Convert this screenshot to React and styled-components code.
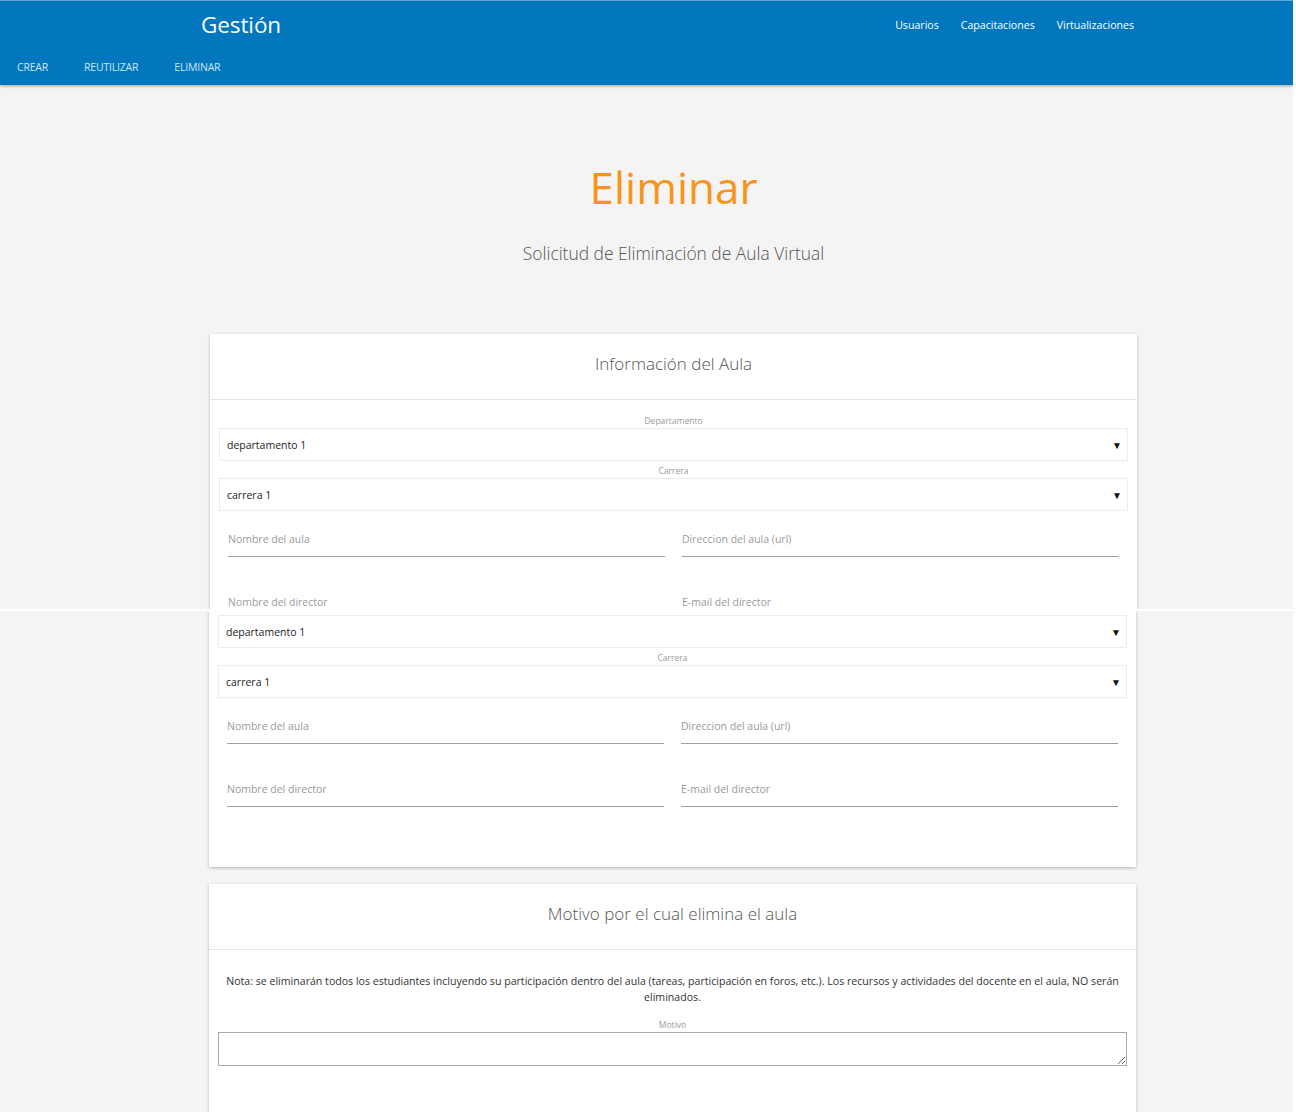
import React from 'react';
import styled, { createGlobalStyle } from 'styled-components';

const Global = createGlobalStyle`
  html, body { margin: 0; padding: 0; background: #fff; }
  body { font-family: "Open Sans", "Noto Sans", sans-serif; }
  * { box-sizing: border-box; }
`;

const Page = styled.div`
  width: 1293px;
  min-height: 1112px;
  background: #f4f4f4;
  overflow: hidden;
`;

const Header = styled.header`
  position: relative;
  z-index: 2;
  height: 85px;
  background: #0277bd;
  border-top: 1px solid #5fa6d6;
  box-shadow: 0 1px 3px rgba(0, 0, 0, 0.35);
  display: flex;
  flex-direction: column;
`;

const TopRow = styled.div`
  height: 48px;
  display: flex;
  align-items: center;
  justify-content: space-between;
  padding: 0 159px 1px 201px;
`;

const Brand = styled.div`
  color: #fff;
  font-size: 22.5px;
  letter-spacing: -0.1px;
`;

const NavLinks = styled.nav`
  display: flex;
  gap: 22px;
`;

const NavLink = styled.a`
  color: #fff;
  font-size: 10.6px;
  text-decoration: none;
`;

const SubRow = styled.nav`
  height: 36px;
  display: flex;
  align-items: center;
  gap: 36px;
  padding-left: 17px;
`;

const SubLink = styled.a`
  color: #cfe5f4;
  font-size: 10.5px;
  letter-spacing: -0.2px;
  text-decoration: none;
  text-transform: uppercase;
`;

const Main = styled.main`
  display: flex;
  flex-direction: column;
`;

const Hero = styled.section`
  width: 927px;
  margin-left: 210px;
  padding-top: 72px;
  padding-bottom: 69px;
  text-align: center;
`;

const Title = styled.h1`
  margin: 0;
  font-size: 44px;
  line-height: 60px;
  font-weight: 400;
  color: #f7941d;
`;

const Subtitle = styled.p`
  margin: 24px 0 0;
  font-size: 17.4px;
  line-height: 24px;
  font-weight: 300;
  color: #555;
`;

const Card = styled.section`
  width: 927px;
  margin-left: ${(p) => p.$left}px;
  margin-top: ${(p) => p.$top || 0}px;
  background: #fff;
  box-shadow: 0 1px 3px rgba(0, 0, 0, 0.25);
  height: ${(p) => (p.$height ? `${p.$height}px` : 'auto')};
  overflow: ${(p) => (p.$height ? 'hidden' : 'visible')};
`;

const CardHeader = styled.div`
  height: 66px;
  padding-bottom: 7px;
  border-bottom: 1px solid #e6e6e6;
  display: flex;
  align-items: center;
  justify-content: center;
  font-size: 17px;
  font-weight: 300;
  color: #555;
`;

const CardBody = styled.div`
  padding: ${(p) => p.$pt}px 9px ${(p) => p.$pb || 0}px;
  display: flex;
  flex-direction: column;
`;

const FieldLabel = styled.div`
  font-size: 8.5px;
  line-height: 14px;
  margin-top: ${(p) => p.$mt || 0}px;
  color: #9a9a9a;
  text-align: center;
`;

const Select = styled.div`
  height: 33px;
  border: 1px solid #ececec;
  display: flex;
  align-items: center;
  justify-content: space-between;
  padding: 0 5px 0 7px;
  font-size: 10.5px;
  color: #222;
`;

const Arrow = styled.span`
  font-size: 10px;
  color: #111;
`;

const InputGrid = styled.div`
  display: grid;
  grid-template-columns: 1fr 1fr;
  column-gap: 17px;
  row-gap: 28px;
  padding: 0 9px;
  margin-top: ${(p) => p.$mt}px;
`;

const TextInput = styled.input`
  display: block;
  width: 100%;
  height: 35px;
  border: none;
  border-bottom: 1px solid #9e9e9e;
  padding: 0;
  background: transparent;
  font-family: inherit;
  font-size: 10.5px;
  outline: none;
  &::placeholder { color: #9a9a9a; }
`;

const Seam = styled.div`
  height: 2px;
  width: 100%;
  background: #fff;
  position: relative;
  z-index: 3;
`;

const Note = styled.p`
  margin: 0;
  font-size: 10.6px;
  line-height: 16px;
  color: #333;
  text-align: center;
`;

const TextArea = styled.textarea`
  display: block;
  width: 100%;
  height: 34px;
  border: 1px solid #a9a9a9;
  background: #fff;
  font-family: inherit;
  resize: vertical;
`;

const Spacer = styled.div`
  height: ${(p) => p.$h}px;
`;

function SelectField({ label, value, mt }) {
  return (
    <>
      {label && <FieldLabel $mt={mt}>{label}</FieldLabel>}
      <Select>
        <span>{value}</span>
        <Arrow>▼</Arrow>
      </Select>
    </>
  );
}

function Inputs({ mt }) {
  return (
    <InputGrid $mt={mt}>
      <TextInput placeholder="Nombre del aula" />
      <TextInput placeholder="Direccion del aula (url)" />
      <TextInput placeholder="Nombre del director" />
      <TextInput placeholder="E-mail del director" />
    </InputGrid>
  );
}

export default function App() {
  return (
    <>
      <Global />
      <Page>
        <Header>
          <TopRow>
            <Brand>Gestión</Brand>
            <NavLinks>
              <NavLink>Usuarios</NavLink>
              <NavLink>Capacitaciones</NavLink>
              <NavLink>Virtualizaciones</NavLink>
            </NavLinks>
          </TopRow>
          <SubRow>
            <SubLink>Crear</SubLink>
            <SubLink>Reutilizar</SubLink>
            <SubLink>Eliminar</SubLink>
          </SubRow>
        </Header>
        <Main>
          <Hero>
            <Title>Eliminar</Title>
            <Subtitle>Solicitud de Eliminación de Aula Virtual</Subtitle>
          </Hero>

          <Card $left={210} $height={275}>
            <CardHeader>Información del Aula</CardHeader>
            <CardBody $pt={14}>
              <SelectField label="Departamento" value="departamento 1" />
              <SelectField label="Carrera" value="carrera 1" mt={3} />
              <Inputs mt={11} />
            </CardBody>
          </Card>
          <Seam />
          <Card $left={209}>
            <CardBody $pt={4} $pb={60}>
              <SelectField value="departamento 1" />
              <SelectField label="Carrera" value="carrera 1" mt={3} />
              <Inputs mt={11} />
            </CardBody>
          </Card>

          <Card $left={209} $top={17}>
            <CardHeader>Motivo por el cual elimina el aula</CardHeader>
            <CardBody $pt={23} $pb={60}>
              <Note>
                Nota: se eliminarán todos los estudiantes incluyendo su participación dentro del aula (tareas, participación en foros, etc.). Los recursos y actividades del docente en el aula, NO serán
                <br />
                eliminados.
              </Note>
              <FieldLabel $mt={13}>Motivo</FieldLabel>
              <TextArea />
            </CardBody>
          </Card>
          <Spacer $h={40} />
        </Main>
      </Page>
    </>
  );
}
